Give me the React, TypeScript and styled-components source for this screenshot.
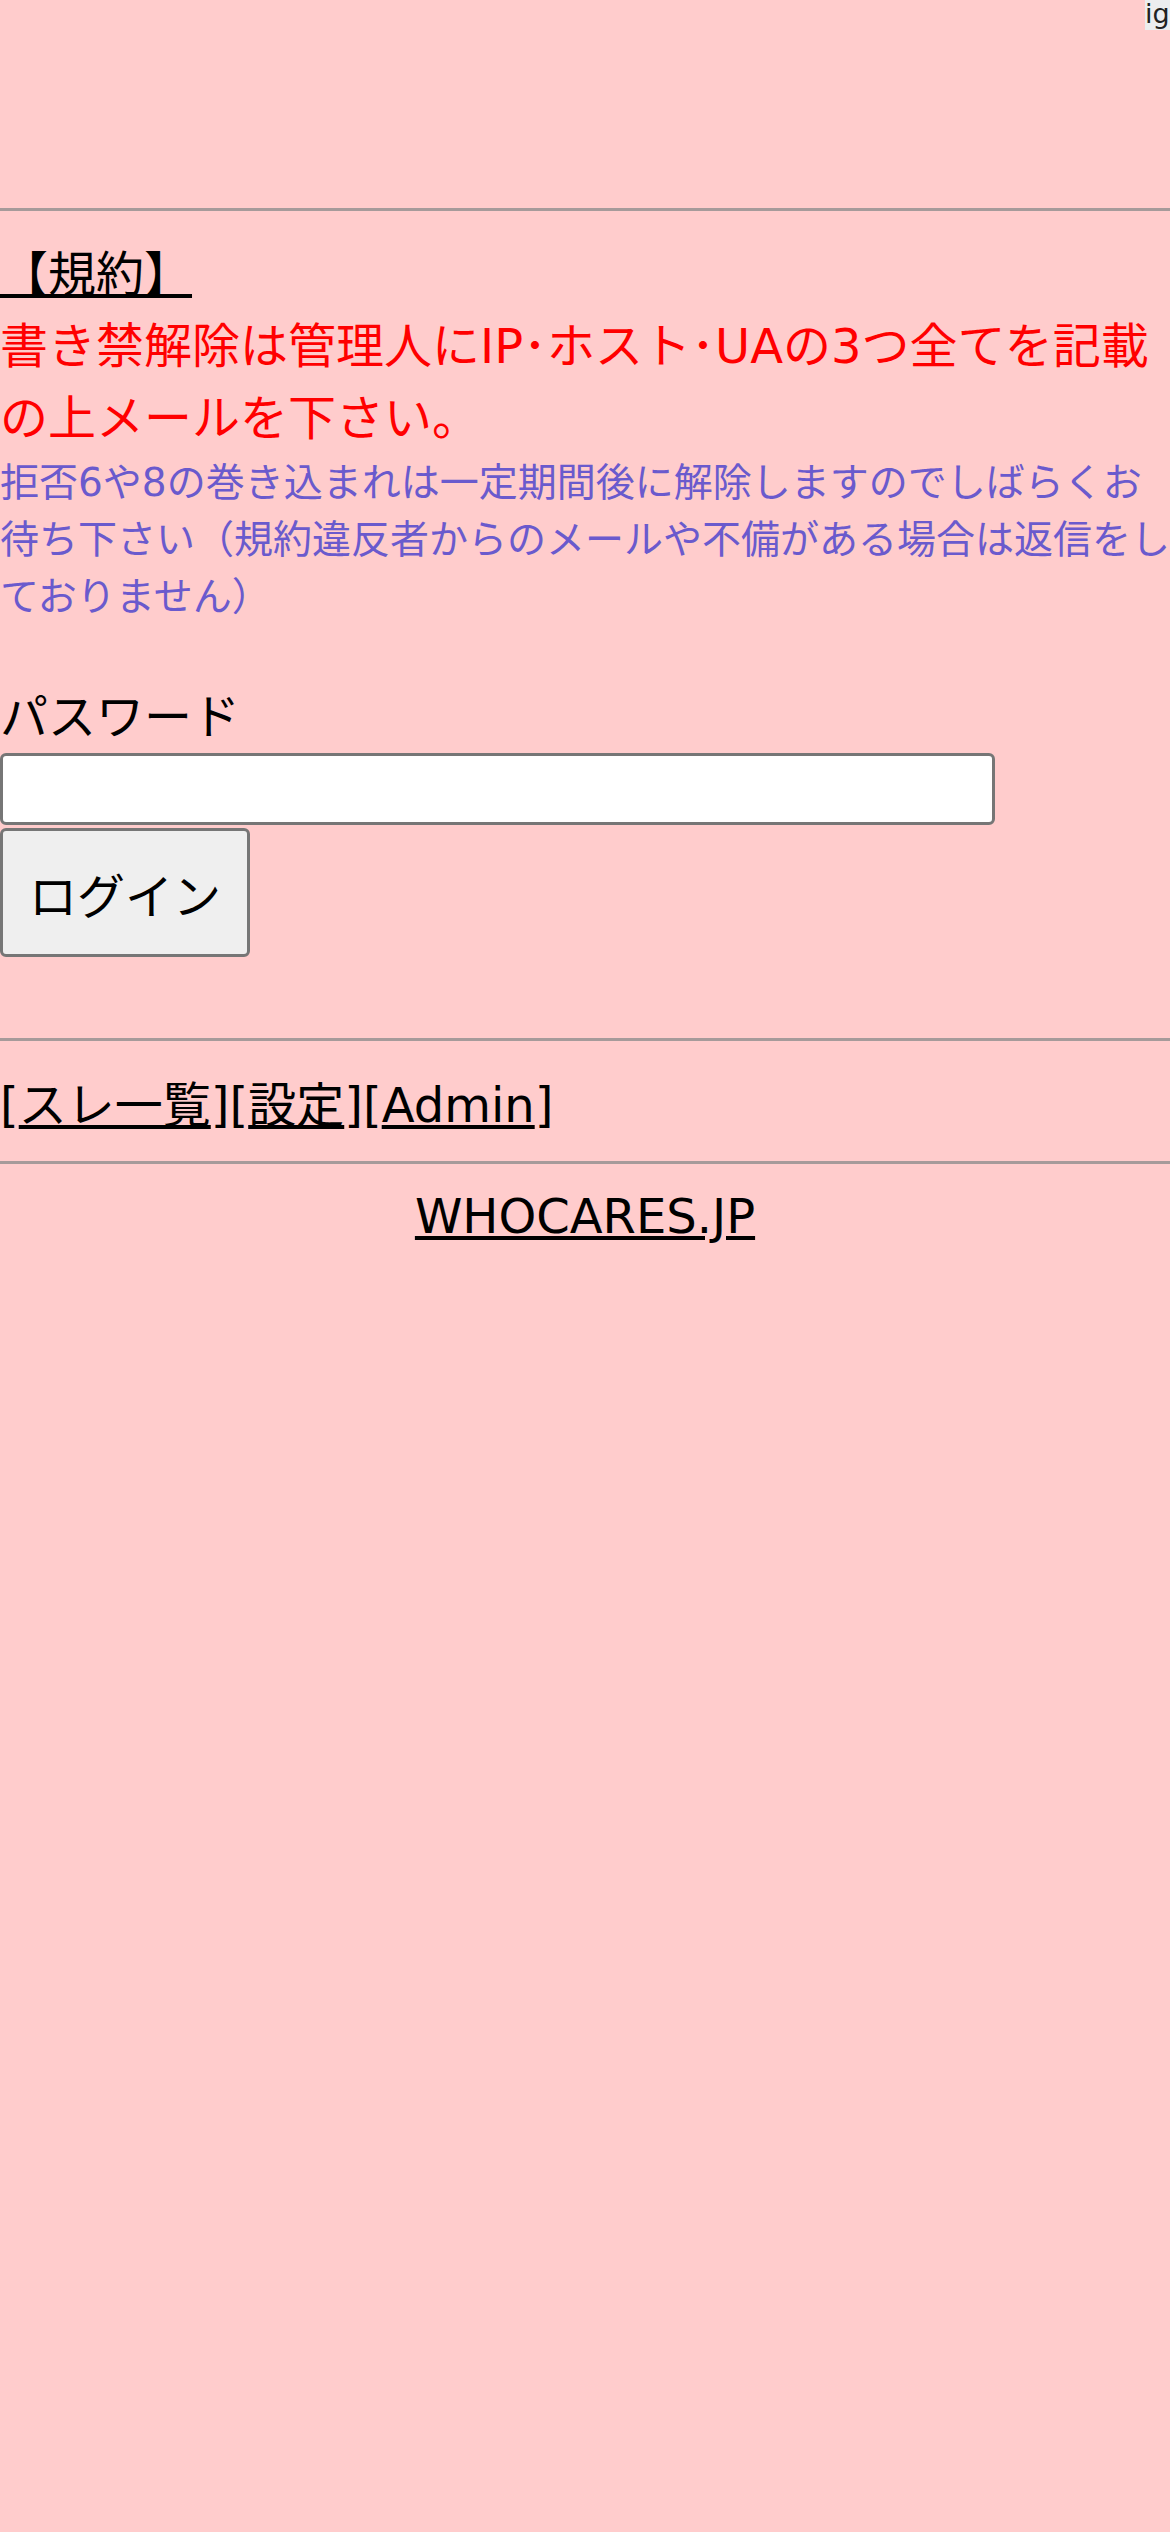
import React from 'react';
import styled, { createGlobalStyle } from 'styled-components';

const GlobalStyle = createGlobalStyle`
  html, body {
    margin: 0;
    padding: 0;
    background: #ffcccc;
  }
  body {
    font-family: 'DejaVu Sans', 'Noto Sans CJK JP', sans-serif;
    font-size: 48px;
    line-height: 72px;
    color: #000;
  }
`;

const Page = styled.div`
  position: relative;
  width: 100%;
  min-height: 2532px;
`;

const TopSlot = styled.div`
  height: 184px;
`;

const Badge = styled.span`
  position: absolute;
  top: 0;
  right: 0;
  width: 25px;
  height: 30px;
  overflow: hidden;
  background: #eceeef;
  color: #222;
  font-size: 27px;
  line-height: 28px;
  white-space: nowrap;
`;

const Rule = styled.hr<{ $top?: number; $bottom?: number }>`
  border: none;
  border-top: 3px solid #a69a9a;
  margin: ${p => p.$top ?? 24}px 0 ${p => p.$bottom ?? 24}px;
  height: 0;
`;

const TermsLink = styled.a`
  color: #000;
  text-decoration: underline;
`;

const Notice = styled.div`
  color: #ff0000;
`;

const Note = styled.div`
  color: #6a5acd;
  font-size: 39px;
  line-height: 57px;
`;

const LoginForm = styled.form`
  margin: 56px 0 0;
`;

const Label = styled.div``;

const PasswordInput = styled.input`
  display: block;
  box-sizing: border-box;
  width: 995px;
  height: 72px;
  margin: 0;
  border: 3px solid #767676;
  border-radius: 6px;
  background: #fff;
  font-size: 48px;
`;

const LoginButton = styled.button`
  display: block;
  box-sizing: border-box;
  width: 250px;
  height: 129px;
  margin: 3px 0 0;
  padding: 0;
  border: 3px solid #767676;
  border-radius: 6px;
  background: #efefef;
  color: #000;
  font-family: 'DejaVu Sans', 'Noto Sans CJK JP', sans-serif;
  font-size: 48px;
`;

const NavRow = styled.div`
  padding-top: 4px;
`;

const NavLink = styled.a`
  color: #000;
  text-decoration: underline;
`;

const Footer = styled.div`
  text-align: center;
  line-height: 57px;
`;

const navItems = ['スレ一覧', '設定', 'Admin'];

const App = () => (
  <Page>
    <GlobalStyle />
    <Badge>ig</Badge>
    <TopSlot />
    <Rule $bottom={27} />
    <TermsLink href="#">【規約】</TermsLink>
    <Notice>書き禁解除は管理人にIP･ホスト･UAの3つ全てを記載の上メールを下さい。</Notice>
    <Note>
      拒否6や8の巻き込まれは一定期間後に解除しますのでしばらくお待ち下さい（規約違反者からのメールや不備がある場合は返信をしておりません）
    </Note>
    <LoginForm onSubmit={e => e.preventDefault()}>
      <Label>パスワード</Label>
      <PasswordInput type="password" />
      <LoginButton type="submit">ログイン</LoginButton>
    </LoginForm>
    <Rule $top={81} />
    <NavRow>
      {navItems.map(item => (
        <React.Fragment key={item}>
          [<NavLink href="#">{item}</NavLink>]
        </React.Fragment>
      ))}
    </NavRow>
    <Rule $top={20} />
    <Footer>
      <NavLink href="#">WHOCARES.JP</NavLink>
    </Footer>
  </Page>
);

export default App;
